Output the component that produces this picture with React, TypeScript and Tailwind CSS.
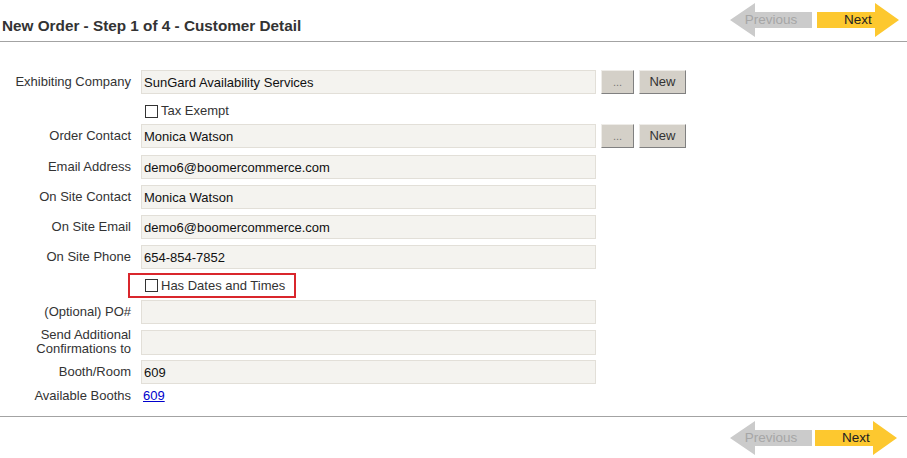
import React from "react";

const font = { fontFamily: '"Liberation Sans", Arial, sans-serif' };

function ArrowButton({
  dir,
  label,
  active,
}: {
  dir: "prev" | "next";
  label: string;
  active?: boolean;
}) {
  const points =
    dir === "prev"
      ? "0,18 25,1 25,10 82,10 82,26 25,26 25,35"
      : "0,10 58,10 58,1 82,18 58,35 58,26 0,26";
  return (
    <button type="button" className="relative h-[36px] w-[82px]">
      <svg width="82" height="36" viewBox="0 0 82 36" className="absolute left-0 top-0">
        <polygon points={points} fill={active ? "#fdc82f" : "#cbcbcb"} />
      </svg>
      <span
        className={`absolute inset-0 flex items-center justify-center text-[13.5px] ${
          active ? "text-[#222]" : "text-[#a6a6a6]"
        }`}
      >
        {label}
      </span>
    </button>
  );
}

function Box() {
  return <span className="inline-block h-[13px] w-[13px] border border-[#333] bg-white" />;
}

function Field({ value }: { value?: string }) {
  return (
    <input
      readOnly
      value={value ?? ""}
      style={font}
      className="h-[24px] w-[455px] border border-[#e2dfd8] bg-[#f4f3ef] px-[2px] text-[13px] text-[#111] outline-none"
    />
  );
}

function GreyButton({ children, w }: { children: React.ReactNode; w: string }) {
  return (
    <button
      type="button"
      style={font}
      className={`${w} h-[24px] border border-t-[#eeece8] border-l-[#eeece8] border-r-[#808080] border-b-[#808080] bg-[#d4d0c8] text-[13px]`}
    >
      {children}
    </button>
  );
}

function Row({
  label,
  children,
  className = "",
}: {
  label?: React.ReactNode;
  children: React.ReactNode;
  className?: string;
}) {
  return (
    <div className={`flex items-center ${className}`}>
      <div className="w-[131px] text-right text-[13px] leading-[14px] text-[#333]">{label}</div>
      <div className="ml-[10px] flex items-center">{children}</div>
    </div>
  );
}

export default function App() {
  return (
    <div style={font} className="min-h-[458px] w-[907px] bg-white text-[#333]">
      <div className="flex h-[42px] justify-between border-b border-[#a3a3a3] pl-[2px] pr-[8px]">
        <h1 className="self-end pb-[3px] text-[15.3px] font-bold text-[#333]">
          New Order - Step 1 of 4 - Customer Detail
        </h1>
        <div className="flex gap-[5px] pt-[2px]">
          <ArrowButton dir="prev" label="Previous" />
          <ArrowButton dir="next" label="Next" active />
        </div>
      </div>

      <div className="pt-[28px]">
        <Row label="Exhibiting Company">
          <Field value="SunGard Availability Services" />
          <div className="ml-[5px] flex gap-[5px]">
            <GreyButton w="w-[33px]">
              <span className="text-[11px] text-[#777]">...</span>
            </GreyButton>
            <GreyButton w="w-[47px]">New</GreyButton>
          </div>
        </Row>
        <Row className="h-[30px] pt-[4px]">
          <label className="flex items-center gap-[3px] pl-[4px] text-[13px] text-[#333]">
            <Box />
            Tax Exempt
          </label>
        </Row>
        <Row label="Order Contact">
          <Field value="Monica Watson" />
          <div className="ml-[5px] flex gap-[5px]">
            <GreyButton w="w-[33px]">
              <span className="text-[11px] text-[#777]">...</span>
            </GreyButton>
            <GreyButton w="w-[47px]">New</GreyButton>
          </div>
        </Row>
        <Row label="Email Address" className="mt-[7px]">
          <Field value="demo6@boomercommerce.com" />
        </Row>
        <Row label="On Site Contact" className="mt-[6px]">
          <Field value="Monica Watson" />
        </Row>
        <Row label="On Site Email" className="mt-[6px]">
          <Field value="demo6@boomercommerce.com" />
        </Row>
        <Row label="On Site Phone" className="mt-[6px]">
          <Field value="654-854-7852" />
        </Row>
        <Row className="mt-[4px]">
          <label className="-ml-[13px] flex h-[25px] w-[168px] items-center gap-[3px] border-2 border-[#d9262c] pl-[15px] text-[13px] text-[#333]">
            <Box />
            Has Dates and Times
          </label>
        </Row>
        <Row label="(Optional) PO#" className="mt-[2px]">
          <Field />
        </Row>
        <Row
          label={
            <>
              Send Additional
              <br />
              Confirmations to
            </>
          }
          className="mt-[4px]"
        >
          <input
            readOnly
            style={font}
            className="h-[25px] w-[455px] border border-[#e2dfd8] bg-[#f4f3ef] px-[2px] text-[13px] outline-none"
          />
        </Row>
        <Row label="Booth/Room" className="mt-[4px]">
          <Field value="609" />
        </Row>
        <Row label="Available Booths" className="mt-[5px] h-[14px]">
          <a href="#" className="pl-[2px] text-[13px] text-[#0000cc] underline">
            609
          </a>
        </Row>
      </div>

      <div className="mt-[13px] flex justify-end gap-[3px] border-t border-[#a3a3a3] pr-[10px] pt-[3px]">
        <ArrowButton dir="prev" label="Previous" />
        <ArrowButton dir="next" label="Next" active />
      </div>
    </div>
  );
}
